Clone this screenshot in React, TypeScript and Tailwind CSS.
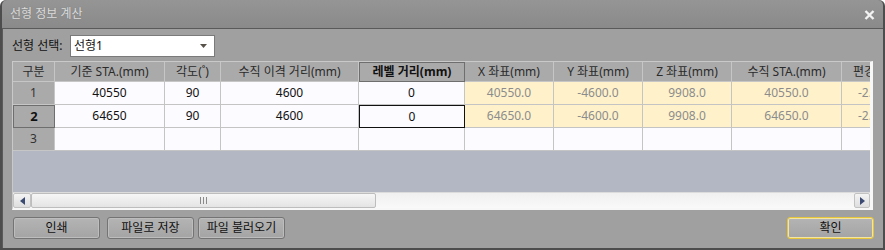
import React from 'react'

const cols = [
    { key: 'no', label: '구분', w: 'w-[42px]' },
    { key: 'sta', label: '기준 STA.(mm)', w: 'w-[110px]' },
    { key: 'ang', label: '각도(˚)', w: 'w-[56px]' },
    { key: 'off', label: '수직 이격 거리(mm)', w: 'w-[138px]' },
    { key: 'lev', label: '레벨 거리(mm)', w: 'w-[106px]' },
    { key: 'x', label: 'X 좌표(mm)', w: 'w-[89px]' },
    { key: 'y', label: 'Y 좌표(mm)', w: 'w-[89px]' },
    { key: 'z', label: 'Z 좌표(mm)', w: 'w-[89px]' },
    { key: 'vsta', label: '수직 STA.(mm)', w: 'w-[110px]' },
    { key: 'cant', label: '편경사(%)', w: 'w-[80px]' },
]

const rows = [
    { no: '1', sta: '40550', ang: '90', off: '4600', lev: '0', x: '40550.0', y: '-4600.0', z: '9908.0', vsta: '40550.0', cant: '-2.000' },
    { no: '2', sta: '64650', ang: '90', off: '4600', lev: '0', x: '64650.0', y: '-4600.0', z: '9908.0', vsta: '64650.0', cant: '-2.000' },
    { no: '3', sta: '', ang: '', off: '', lev: '', x: '', y: '', z: '', vsta: '', cant: '' },
]

const calcCols = ['x', 'y', 'z', 'vsta', 'cant']

const Btn = ({ label, focus }: { label: string; focus?: boolean }) => (
    <button
        className={`w-[87px] h-[22px] rounded-[3px] border text-[12px] leading-none text-[#111] bg-gradient-to-b from-[#b4b4b4] to-[#a4a4a4] ${focus ? 'border-[#e6c53a] shadow-[inset_0_0_0_1px_#f3e6a4]' : 'border-[#747474] shadow-[inset_0_0_0_1px_#bdbdbd]'}`}
    >
        {label}
    </button>
)

export default function App() {
    return (
        <div className="w-[885px] h-[250px] bg-[#4d4d4d] rounded-t-[6px] px-[2px] pb-[2px] flex flex-col font-['Noto_Sans','Noto_Sans_CJK_KR',sans-serif] text-[12px] select-none">

            {/* title bar */}
            <div className="h-[28px] shrink-0 flex items-center justify-between pl-[8px] pr-[8px] bg-gradient-to-b from-[#959595] to-[#8a8a8a] rounded-t-[5px]">
                <span className="text-[#dcdcdc] text-[12px] leading-none [text-shadow:0_0_1px_#777]">선형 정보 계산</span>
                <svg width="11" height="10" viewBox="0 0 11 10" className="mt-[1px]">
                    <path d="M1.5 1 L9.5 9 M9.5 1 L1.5 9" stroke="#f2f2f2" strokeWidth="2.4" />
                </svg>
            </div>

            {/* client area */}
            <div className="flex-1 flex flex-col border-t border-l border-[#5a5a5a] bg-[#a0a0a0] pl-[9px] pr-[9px] pt-[6px]">

                {/* selector */}
                <div className="flex items-center h-[22px]">
                    <span className="w-[58px] text-[#111] leading-none">선형 선택:</span>
                    <div className="w-[145px] h-[22px] bg-white border border-[#7a7a7a] flex items-center justify-between pl-[3px] pr-[7px]">
                        <span className="text-[#111] leading-none">선형1</span>
                        <svg width="7" height="4" viewBox="0 0 7 4">
                            <path d="M0 0 H7 L3.5 4 Z" fill="#56524a" />
                        </svg>
                    </div>
                </div>

                {/* grid */}
                <div className="mt-[4px] w-[861px] h-[149px] border-t border-l border-[#c9c9c9] border-r-[3px] border-b-[2px] border-r-[#f7f7f7] border-b-[#f7f7f7] bg-[#b3b7c3] flex flex-col overflow-hidden">
                    <div className="w-[857px] overflow-hidden flex flex-col">
                        {/* header */}
                        <div className="flex h-[20px] shrink-0">
                            {cols.map((c) => (
                                <div
                                    key={c.key}
                                    className={`${c.w} shrink-0 flex items-center justify-center leading-none text-[#2b2b2b] bg-[#aaaaaa] ${c.key === 'lev' ? 'border border-[#6e6e6e] font-bold text-[#111]' : 'border-r border-b border-[#c6c6c6]'} ${c.key === 'cant' ? 'justify-start pl-[11px]' : ''}`}
                                >
                                    {c.label}
                                </div>
                            ))}
                        </div>
                        {/* rows */}
                        {rows.map((r) => (
                            <div key={r.no} className="flex h-[23px] shrink-0">
                                {cols.map((c) => {
                                    const v = (r as Record<string, string>)[c.key]
                                    if (c.key === 'no') {
                                        const cur = r.no === '2'
                                        return (
                                            <div
                                                key={c.key}
                                                className={`${c.w} shrink-0 flex items-center justify-center leading-none bg-[#aaaaaa] ${cur ? 'border border-[#6e6e6e] font-bold text-[#111] text-[13px]' : 'border-r border-b border-[#c6c6c6] text-[#333]'}`}
                                            >
                                                {v}
                                            </div>
                                        )
                                    }
                                    const calc = calcCols.includes(c.key) && v !== ''
                                    const focus = r.no === '2' && c.key === 'lev'
                                    return (
                                        <div
                                            key={c.key}
                                            className={`${c.w} shrink-0 flex items-center leading-none ${c.key === 'cant' ? 'justify-start pl-[16px]' : 'justify-center'} ${calc ? 'bg-[#fff2cb] text-[#8c8c8c]' : 'bg-[#fcfbff] text-[#111]'} ${focus ? 'border border-[#111]' : 'border-r border-b border-[#c4c4c4]'}`}
                                        >
                                            {v}
                                        </div>
                                    )
                                })}
                            </div>
                        ))}
                    </div>

                    {/* empty area */}
                    <div className="flex-1" />

                    {/* horizontal scrollbar */}
                    <div className="h-[16px] shrink-0 w-[857px] flex bg-gradient-to-b from-[#f0f0f0] to-[#f9f9f9] border-t border-[#dcdcdc]">
                        <div className="w-[18px] h-full flex items-center justify-center bg-gradient-to-b from-[#f4f4f4] to-[#dedede] border border-[#c2c2c2] rounded-[2px]">
                            <svg width="5" height="8" viewBox="0 0 5 8"><path d="M5 0 V8 L0 4 Z" fill="#3b4a72" /></svg>
                        </div>
                        <div className="w-[345px] h-full flex items-center justify-center bg-gradient-to-b from-[#f6f6f6] to-[#e4e4e4] border border-[#bdbdbd] rounded-[2px]">
                            <svg width="7" height="7" viewBox="0 0 7 7"><path d="M0.5 0 V7 M3.5 0 V7 M6.5 0 V7" stroke="#8a8a8a" strokeWidth="1" /></svg>
                        </div>
                        <div className="flex-1" />
                        <div className="w-[16px] h-full flex items-center justify-center bg-gradient-to-b from-[#f4f4f4] to-[#dedede] border border-[#c2c2c2] rounded-[2px]">
                            <svg width="5" height="8" viewBox="0 0 5 8"><path d="M0 0 V8 L5 4 Z" fill="#3b4a72" /></svg>
                        </div>
                    </div>
                </div>

                {/* buttons */}
                <div className="mt-[7px] flex items-center pl-[1px]">
                    <Btn label="인쇄" />
                    <div className="ml-[7px] flex gap-[4px]">
                        <Btn label="파일로 저장" />
                        <Btn label="파일 불러오기" />
                    </div>
                    <div className="flex-1" />
                    <Btn label="확인" focus />
                </div>
            </div>
        </div>
    )
}
